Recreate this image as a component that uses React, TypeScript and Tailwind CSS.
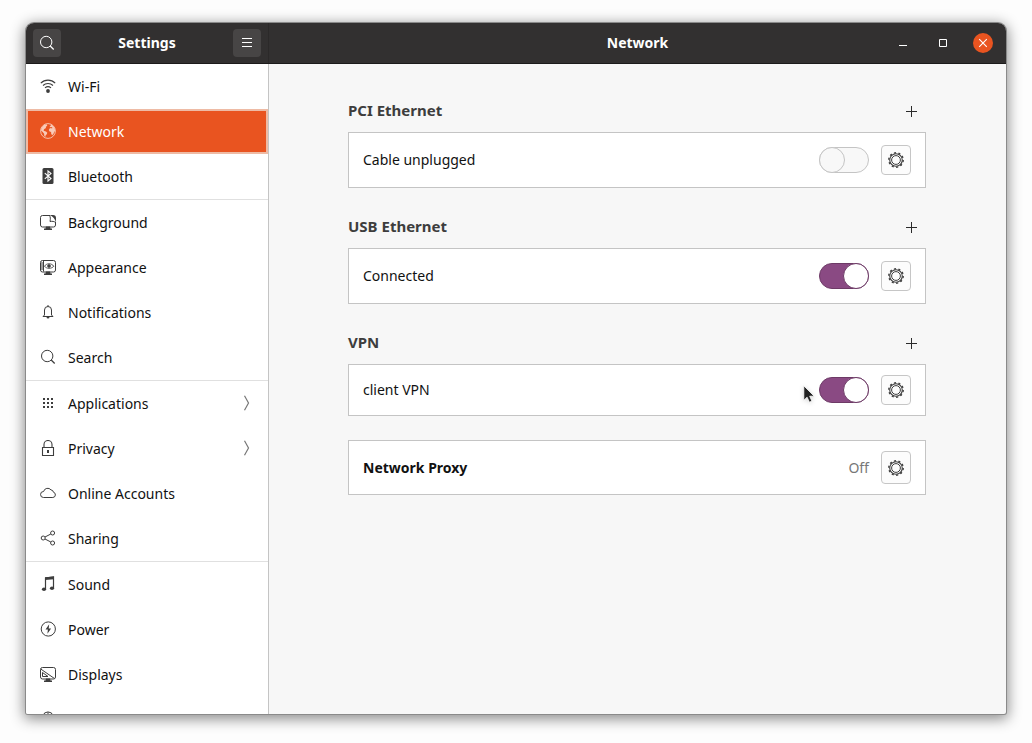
import { useState } from 'react';
import type { ReactNode } from 'react';

type IconProps = { className?: string; children: ReactNode };

const Icon = ({ className = 'size-4', children }: IconProps) => (
    <svg
        viewBox="0 0 16 16"
        className={`shrink-0 ${className}`}
        fill="none"
        stroke="currentColor"
        strokeWidth="1"
        aria-hidden="true"
    >
        {children}
    </svg>
);

const WifiIcon = () => (
    <Icon>
        <path d="M.8 5.100C4.800 1.100 11.200 1.100 15.200 5.100M3 7.500c2.800-2.600 7.200-2.600 10 0M5 9.900c1.700-1.500 4.300-1.500 6 0" strokeWidth="1.100" />
        <circle cx="8" cy="13" r="1.900" fill="currentColor" stroke="none" />
    </Icon>
);

const GlobeIcon = () => (
    <Icon>
        <circle cx="8" cy="8" r="7.400" strokeWidth=".9" />
        <path
            d="M1.500 5 4 2l2.500-.7.8 1.200L5.800 4l.2 1-1.700 1-.8 1.300.8.8 1.700.4 1.300 1.300-.5 1.500-1.100 1-.4 1.700-1-1-.2-2.300-1.400-1.600L1 7.500Z"
            fill="currentColor"
            stroke="none"
        />
        <path
            d="m10.300 1.300 2.700 1.500 1.800 2.600.3 2.600-1 1-.7 2-1.300 1.200-.9-1.400-.1-1.800-1.500-.6-.8-1.400.8-1.600 1.400-.3 1 .5.500-.8-1.200-.8-1.300.3-.3-.9 1.200-.8Z"
            fill="currentColor"
            stroke="none"
        />
    </Icon>
);

const BluetoothIcon = () => (
    <Icon>
        <rect x="2.500" y="0" width="11" height="16" rx="1.500" fill="currentColor" stroke="none" />
        <path d="m4.800 5.200 6.200 5.400L8 13V3l3 2.400-6.200 5.400" stroke="#fff" strokeWidth="1.100" />
    </Icon>
);

const MonitorStand = () => (
    <path d="M6 12.500h4l.5 2H12V16H4v-1.500h1.500Z" fill="currentColor" stroke="none" />
);

const BackgroundIcon = () => (
    <Icon>
        <path d="M10 1.500H2.500a2 2 0 0 0-2 2v7.500a2 2 0 0 0 2 2h11a2 2 0 0 0 2-2V8" />
        <path d="M9.500 1.500c1 1.500 1 3.500.5 6 2.500-.5 4 0 5.500.8" />
        <path d="M9.500 1H13a3 3 0 0 1 3 3v4.500C15.300 5.300 13 2.500 9.500 1Z" fill="currentColor" stroke="none" />
        <MonitorStand />
    </Icon>
);

const AppearanceIcon = () => (
    <Icon>
        <rect x=".5" y="1.500" width="15" height="11.500" rx="2" />
        <path d="M3.500 1.500v11M1 4h2M1 6h2M1 8h2M1 10h2" />
        <path d="M4.500 7.200C6.500 4 11.500 4 13.800 7.200 11.500 10 6.500 10 4.500 7.200Z" strokeWidth=".9" />
        <circle cx="9" cy="7" r="1.300" fill="currentColor" />
        <MonitorStand />
    </Icon>
);

const BellIcon = () => (
    <Icon>
        <path d="M8 1v1.500M4.500 11V6a3.500 3.500 0 0 1 7 0v5l1.500 1.500H3Z" />
        <path d="M6.500 13h3a1.500 1.500 0 0 1-3 0Z" fill="currentColor" stroke="none" />
    </Icon>
);

const SearchIcon = () => (
    <Icon>
        <circle cx="7.200" cy="7" r="5.700" />
        <path d="m11.200 11 3.500 3.500" strokeWidth="1.200" />
    </Icon>
);

const GridIcon = () => (
    <Icon>
        <path d="M3 4h2m2 0h2m2 0h2M3 8h2m2 0h2m2 0h2M3 12h2m2 0h2m2 0h2" strokeWidth="2" />
    </Icon>
);

const LockIcon = () => (
    <Icon>
        <path d="M2.500 7.500h11v8h-11ZM4 7.500v-3a4 4 0 0 1 8 0v3" strokeWidth="1.100" />
        <path d="M8 10v3" strokeWidth="2" />
    </Icon>
);

const CloudIcon = () => (
    <Icon>
        <path d="M3.500 12.500h9.300a2.700 2.700 0 0 0 .6-5.300 2.600 2.600 0 0 0-2.400-2.300A4.200 4.200 0 0 0 3.600 6.500a3 3 0 0 0-.1 6Z" />
    </Icon>
);

const ShareIcon = () => (
    <Icon>
        <circle cx="3.200" cy="8" r="2" />
        <circle cx="12.600" cy="3" r="2" />
        <circle cx="12.600" cy="13" r="2" />
        <path d="m5 7 5.800-3M5 9l5.800 3" />
    </Icon>
);

const SoundIcon = () => (
    <Icon>
        <path d="M5.500 13V2l8-1v11" strokeWidth="1.200" />
        <path d="M5 1.300 14 .4v2.800l-9 .9Z" fill="currentColor" stroke="none" />
        <ellipse cx="4" cy="13.200" rx="2.100" ry="1.800" fill="currentColor" stroke="none" />
        <ellipse cx="12" cy="12.200" rx="2.100" ry="1.800" fill="currentColor" stroke="none" />
    </Icon>
);

const PowerIcon = () => (
    <Icon>
        <circle cx="8.300" cy="8" r="7.100" />
        <path d="m9.200 3.200-3.700 5.200h2.400l-.5 4.400 3.700-5.200H8.700Z" fill="currentColor" stroke="none" />
    </Icon>
);

const DisplaysIcon = () => (
    <Icon>
        <rect x=".5" y="1.500" width="15" height="11.500" rx="2" />
        <path d="m1 3.200 13 9M2.500 6.500v4H8Z" />
        <MonitorStand />
    </Icon>
);

const MouseIcon = () => (
    <Icon>
        <rect x="3.500" y="1" width="9" height="14" rx="4" />
        <path d="M8 1v5" />
    </Icon>
);

const GearIcon = () => (
    <Icon>
        <circle cx="8" cy="8" r="4.400" />
        <circle cx="8" cy="8" r="6.300" strokeWidth="1.100" />
        <circle cx="8" cy="8" r="7.200" strokeWidth="1.400" strokeDasharray="2.100 2.424" />
    </Icon>
);

const PlusIcon = () => (
    <Icon>
        <path d="M8.500 3v11M3 8.500h11" />
    </Icon>
);

const ChevronIcon = () => (
    <Icon className="mb-px size-4 text-[#777]">
        <path d="m6.500.8 4 7.200-4 7.200" strokeWidth="1.200" />
    </Icon>
);

const groups = [
    [
        { name: 'Wi-Fi', icon: <WifiIcon /> },
        { name: 'Network', icon: <GlobeIcon /> },
        { name: 'Bluetooth', icon: <BluetoothIcon /> }
    ],
    [
        { name: 'Background', icon: <BackgroundIcon /> },
        { name: 'Appearance', icon: <AppearanceIcon /> },
        { name: 'Notifications', icon: <BellIcon /> },
        { name: 'Search', icon: <SearchIcon /> }
    ],
    [
        { name: 'Applications', icon: <GridIcon />, submenu: true },
        { name: 'Privacy', icon: <LockIcon />, submenu: true },
        { name: 'Online Accounts', icon: <CloudIcon /> },
        { name: 'Sharing', icon: <ShareIcon /> }
    ],
    [
        { name: 'Sound', icon: <SoundIcon /> },
        { name: 'Power', icon: <PowerIcon /> },
        { name: 'Displays', icon: <DisplaysIcon /> },
        { name: 'Mouse & Touchpad', icon: <MouseIcon /> }
    ]
];

type Item = { name: string; icon: ReactNode; submenu?: boolean };

const SidebarItem = ({ item, active, onSelect }: { item: Item; active: boolean; onSelect: () => void }) => (
    <li>
        <a
            href="#"
            onClick={onSelect}
            aria-current={active ? 'page' : undefined}
            className={`flex h-[45px] items-center gap-3 border-2 px-3 ${
                active ? 'border-[#eebba5] bg-[#e95420] text-white' : 'border-transparent text-[#111]'
            }`}
        >
            <span className={`pb-px ${active ? 'text-[#f8cbb9]' : 'text-[#3d3d3d]'}`}>{item.icon}</span>
            <span className="flex-1">{item.name}</span>
            {item.submenu && <ChevronIcon />}
        </a>
    </li>
);

const GearButton = ({ label, className = 'h-[30px]' }: { label: string; className?: string }) => (
    <button
        type="button"
        aria-label={label}
        className={`flex w-[30px] items-center justify-center rounded border border-[#c6c6c6] bg-[#fcfcfc] text-[#3d3d3d] ${className}`}
    >
        <GearIcon />
    </button>
);

const Pointer = () => (
    <svg viewBox="0 0 12 18" className="pointer-events-none absolute top-2 right-full mr-1 h-[18px] w-3 drop-shadow-sm" aria-hidden="true">
        <path d="M.8.8v14.500l3.300-3.100 2.300 5 2.500-1.100-2.200-4.900h4.500Z" fill="#222" stroke="#fff" strokeWidth=".8" />
    </svg>
);

type ConnectionProps = {
    title: string;
    status: string;
    initial: boolean;
    height: string;
    pointer?: boolean;
};

const Connection = ({ title, status, initial, height, pointer }: ConnectionProps) => {
    const [enabled, setEnabled] = useState(initial);

    return (
        <section className="mb-6">
            <div className="mb-1.5 flex h-[30px] items-center justify-between">
                <h2 className="text-[15px] font-bold text-[#3d3d3d]">{title}</h2>
                <button type="button" aria-label={`Add ${title} profile`} className="flex size-[30px] items-center justify-center text-[#2b2b2b]">
                    <PlusIcon />
                </button>
            </div>
            <div className={`flex items-center gap-3 border border-[#c4c4c4] bg-white px-3.5 ${height}`}>
                <label htmlFor={title} className="flex-1">{status}</label>
                <div className="relative flex">
                    <input
                        id={title}
                        type="checkbox"
                        role="switch"
                        checked={enabled}
                        onChange={(e) => setEnabled(e.target.checked)}
                        className="relative h-[26px] w-[50px] appearance-none rounded-full border border-[#c4c4c4] bg-[#f8f8f8] before:absolute before:-top-px before:-left-px before:size-[26px] before:rounded-full before:border before:border-[#c4c4c4] before:bg-[#f8f8f8] checked:border-[#6d3a66] checked:bg-[#8a4a83] checked:before:left-[23px] checked:before:border-[#6d3a66] checked:before:bg-white"
                    />
                    {pointer && <Pointer />}
                </div>
                <GearButton label={`${title} options`} />
            </div>
        </section>
    );
};

const SettingsWindow = () => {
    const [page, setPage] = useState('Network');

    return (
        <div className="flex h-screen bg-[#fdfdfd] px-[26px] pt-[23px] pb-[29px] font-['Noto_Sans',sans-serif] text-sm text-[#111]">
            <div className="flex min-w-0 flex-1 flex-col overflow-hidden rounded-t-lg rounded-b-xs bg-[#f7f7f7] shadow-[0_0_0_1px_#8a8a8a,0_3px_14px_2px_rgba(0,0,0,0.45)]">
                <header className="flex h-[41px] shrink-0 border-b border-[#1c1b1b] bg-[#323030] font-bold text-white">
                    <div className="flex w-[243px] shrink-0 items-center justify-between border-r border-[#2b2929] px-[7px]">
                        <button type="button" aria-label="Search settings" className="flex size-7 items-center justify-center rounded bg-[#474545]">
                            <SearchIcon />
                        </button>
                        <h1>Settings</h1>
                        <button type="button" aria-label="Menu" className="flex size-7 items-center justify-center rounded bg-[#474545]">
                            <Icon>
                                <path d="M3 3.500h10M3 7.500h10M3 11.500h10" />
                            </Icon>
                        </button>
                    </div>
                    <div className="flex flex-1 items-center px-[13px]">
                        <div className="flex-1" />
                        <p>{page}</p>
                        <div className="flex flex-1 justify-end gap-5">
                            <button type="button" aria-label="Minimize" className="flex size-5 items-center justify-center">
                                <Icon>
                                    <path d="M4 10.500h8" />
                                </Icon>
                            </button>
                            <button type="button" aria-label="Maximize" className="flex size-5 items-center justify-center">
                                <Icon>
                                    <path d="M4.500 4.500h7v7h-7Z" />
                                </Icon>
                            </button>
                            <button type="button" aria-label="Close" className="flex size-5 items-center justify-center rounded-full bg-[#e95420]">
                                <Icon>
                                    <path d="m4.200 4.200 7.600 7.600m0-7.600-7.600 7.600" strokeWidth="1.100" />
                                </Icon>
                            </button>
                        </div>
                    </div>
                </header>

                <div className="flex min-h-0 flex-1">
                    <nav aria-label="Settings" className="w-[243px] shrink-0 overflow-y-auto border-r border-[#c4c4c4] bg-white [scrollbar-width:none]">
                        {groups.map((group, i) => (
                            <ul key={i} className="border-b border-[#e0e0e0]">
                                {group.map((item) => (
                                    <SidebarItem
                                        key={item.name}
                                        item={item}
                                        active={item.name === page}
                                        onSelect={() => setPage(item.name)}
                                    />
                                ))}
                            </ul>
                        ))}
                    </nav>

                    <main className="min-w-0 flex-1 overflow-auto pt-8 pr-[25px] pl-6">
                        <div className="mx-auto max-w-[578px]">
                            <Connection title="PCI Ethernet" status="Cable unplugged" initial={false} height="h-14" />
                            <Connection title="USB Ethernet" status="Connected" initial={true} height="h-14" />
                            <Connection title="VPN" status="client VPN" initial={true} height="h-[52px]" pointer />
                            <section className="flex h-[55px] items-center gap-3 border border-[#c4c4c4] bg-white px-3.5">
                                <h2 className="flex-1 font-bold">Network Proxy</h2>
                                <span className="text-[#777]">Off</span>
                                <GearButton label="Network Proxy options" className="h-[33px]" />
                            </section>
                        </div>
                    </main>
                </div>
            </div>
        </div>
    );
};

export default SettingsWindow;
